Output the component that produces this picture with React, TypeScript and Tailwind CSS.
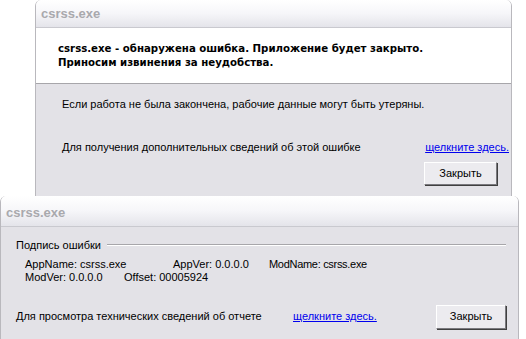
export default function App() {
  const body = { fontFamily: '"Liberation Sans", Arial, sans-serif' }
  const bold = { fontFamily: '"DejaVu Sans", Verdana, sans-serif' }

  return (
    <div className="w-[526px] h-[339px] bg-white overflow-hidden" style={body}>
      {/* top dialog */}
      <div className="ml-[35px] w-[477px] h-[196px] flex flex-col border-l border-r border-[#b9b8bd] rounded-t-[6px] overflow-hidden">
        <div className="h-[28px] flex items-center pl-[5px] border-b border-[#c9c9cf] bg-gradient-to-b from-white via-[#f6f6f9] to-[#e4e4ea] text-[#a9a9ad] font-bold text-[13px]">
          csrss.exe
        </div>
        <div
          className="h-[56px] bg-white border-b border-[#a7a6aa] pl-[22px] pt-[14px] text-[10.2px] font-bold leading-[14px] text-black"
          style={bold}
        >
          <p>csrss.exe - обнаружена ошибка. Приложение будет закрыто.</p>
          <p>Приносим извинения за неудобства.</p>
        </div>
        <div className="flex-1 bg-[#e3e2e7] pl-[26px] pr-[2px] text-[11px] text-black">
          <p className="mt-[12px]">Если работа не была закончена, рабочие данные могут быть утеряны.</p>
          <div className="flex justify-between mt-[26px]">
            <span>Для получения дополнительных сведений об этой ошибке</span>
            <span className="text-[#0000ee] underline">щелкните здесь.</span>
          </div>
          <div className="flex justify-end mt-[7px] mr-[12px]">
            <button className="w-[73px] h-[23px] bg-[#ecebef] border border-t-white border-l-white border-r-[#7a797e] border-b-[#7a797e] shadow-[1px_1px_0_#404040] text-[11px] text-black">
              Закрыть
            </button>
          </div>
        </div>
      </div>

      {/* bottom dialog */}
      <div className="w-[519px] h-[143px] flex flex-col border-l border-r border-[#b9b8bd] rounded-t-[6px] overflow-hidden">
        <div className="h-[31px] flex items-center pl-[5px] pt-[3px] border-b border-[#c9c9cf] bg-gradient-to-b from-white via-[#f6f6f9] to-[#e4e4ea] text-[#a9a9ad] font-bold text-[13px]">
          csrss.exe
        </div>
        <div className="flex-1 bg-[#e3e2e7] text-[11px] text-black pl-[15px] pr-[12px]">
          <div className="flex items-center mt-[10px]">
            <span>Подпись ошибки</span>
            <div className="flex-1 ml-[6px] h-[2px] border-t border-[#a7a6aa] border-b border-b-white" />
          </div>
          <div className="pl-[9px] mt-[4px] leading-[13px]">
            <div className="flex">
              <span className="w-[148px]">AppName: csrss.exe</span>
              <span className="w-[96px]">AppVer: 0.0.0.0</span>
              <span className="tracking-[-0.3px]">ModName: csrss.exe</span>
            </div>
            <div className="flex">
              <span className="w-[99px]">ModVer: 0.0.0.0</span>
              <span>Offset: 00005924</span>
            </div>
          </div>
          <div className="flex items-center mt-[21px]">
            <span className="w-[277px]">Для просмотра технических сведений об отчете</span>
            <span className="text-[#0000ee] underline">щелкните здесь.</span>
            <div className="flex-1" />
            <button className="w-[70px] h-[24px] bg-[#ecebef] border border-t-white border-l-white border-r-[#7a797e] border-b-[#7a797e] shadow-[1px_1px_0_#404040] text-[11px] text-black">
              Закрыть
            </button>
          </div>
        </div>
      </div>
    </div>
  )
}
